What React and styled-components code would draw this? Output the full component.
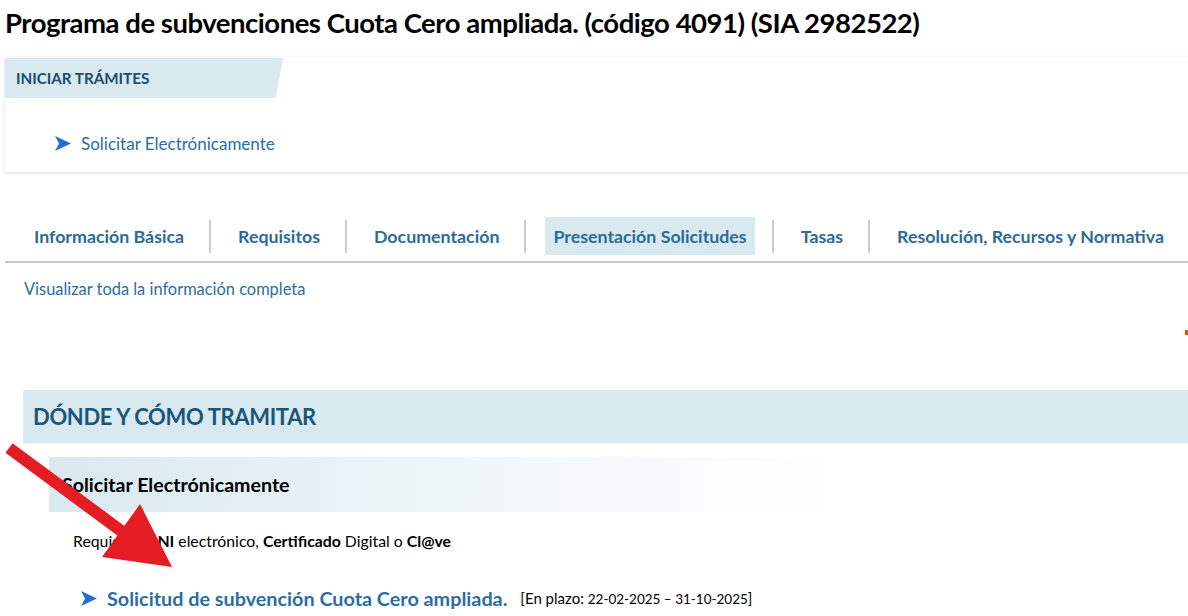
import React from "react";
import styled, { createGlobalStyle } from "styled-components";

const GlobalStyle = createGlobalStyle`
  html, body { margin: 0; padding: 0; background: #ffffff; }
  body {
    font-family: Lato, "Open Sans", sans-serif;
    overflow: hidden;
    width: 1188px;
    height: 616px;
  }
`;

const Page = styled.div`
  position: relative;
  width: 1200px;
  padding-left: 5px;
`;

const Title = styled.h1`
  margin: 0;
  padding-top: 6px;
  height: 51px;
  font-size: 27.5px;
  letter-spacing: -0.48px;
  font-weight: 700;
  color: #000;
  line-height: 34px;
`;

const Card = styled.section`
  height: 115px;
  background: #fff;
  box-shadow: 0 1px 4px rgba(0, 0, 0, 0.13);
  display: flex;
  flex-direction: column;
`;

const CardTab = styled.div`
  width: 278px;
  height: 40px;
  margin-top: 1px;
  background: #d9e9f0;
  clip-path: polygon(0 0, 100% 0, 97.4% 100%, 0 100%);
  display: flex;
  align-items: center;
  padding-left: 11px;
  box-sizing: border-box;
  font-size: 15.2px;
  font-weight: 700;
  color: #1b4d6c;
`;

const CardBody = styled.div`
  padding: 35px 0 0 50px;
`;

const LinkRow = styled.a`
  display: flex;
  align-items: center;
  gap: ${(p) => p.$gap || 10}px;
  text-decoration: none;
  color: #2b6da3;
  font-size: ${(p) => p.$size || 17}px;
  font-weight: ${(p) => p.$weight || 400};
  cursor: pointer;
`;

const SendIcon = ({ color = "#1e6fd8" }) => (
  <svg width="16" height="15" viewBox="0 0 16 15">
    <path d="M0 0 L16 7.5 L0 15 L4 7.5 Z" fill={color} />
  </svg>
);

const TabBar = styled.nav`
  margin-top: 45px;
  display: flex;
  align-items: center;
  padding-left: 21px;
  padding-bottom: 6px;
  border-bottom: 2px solid #c8c8c8;
`;

const Tab = styled.a`
  height: 38px;
  display: flex;
  align-items: center;
  padding: 0 8px;
  font-size: 17.8px;
  font-weight: 700;
  color: #2d6a98;
  background: ${(p) => (p.$active ? "#d9e9f0" : "transparent")};
  white-space: nowrap;
  cursor: pointer;
`;

const Separator = styled.span`
  width: 2px;
  height: 33px;
  background: #cbcbcb;
  margin: 0 19px 0 17px;
`;

const FullInfo = styled.a`
  display: block;
  margin: 16px 0 0 19px;
  font-size: 16.4px;
  color: #2b6da3;
  line-height: 20px;
  cursor: pointer;
`;

const EdgeRow = styled.div`
  display: flex;
  justify-content: flex-end;
  height: 20px;
  margin-top: 22px;
  padding-right: 17px;
`;

const EdgeMark = styled.span`
  width: 3px;
  height: 5px;
  margin-top: 9px;
  background: #d9531e;
`;

const Section = styled.section`
  margin: 49px 0 0 18px;
`;

const SectionHeader = styled.h2`
  margin: 0;
  height: 53px;
  display: flex;
  align-items: center;
  padding-left: 10px;
  background: #d9e9f0;
  font-size: 22px;
  font-weight: 700;
  color: #1a5678;
  letter-spacing: -0.35px;
`;

const SubHeader = styled.h3`
  margin: 14px 0 0 26px;
  width: 806px;
  height: 55px;
  box-sizing: border-box;
  display: flex;
  align-items: center;
  padding-left: 13px;
  background: linear-gradient(to right, #d9e9f0 0%, #f3f8fa 60%, #ffffff 100%);
  font-size: 19.6px;
  font-weight: 700;
  color: #000;
`;

const Requirement = styled.p`
  margin: 19px 0 0 50px;
  font-size: 15.8px;
  line-height: 20px;
  color: #000;
`;

const ApplyRow = styled.div`
  display: flex;
  align-items: center;
  margin: 35px 0 0 58px;
`;

const Deadline = styled.span`
  margin-left: 13px;
  font-size: 15px;
  color: #000;
  white-space: nowrap;
`;

const Dates = styled.span`
  font-size: 13.5px;
`;

const RedArrow = styled.svg`
  position: absolute;
  left: 0;
  top: 430px;
  pointer-events: none;
`;

const tabs = [
  "Información Básica",
  "Requisitos",
  "Documentación",
  "Presentación Solicitudes",
  "Tasas",
  "Resolución, Recursos y Normativa",
];

export default function App() {
  return (
    <>
      <GlobalStyle />
      <Page>
        <Title>
          Programa de subvenciones Cuota Cero ampliada. (código 4091) (SIA 2982522)
        </Title>
        <Card>
          <CardTab>INICIAR TRÁMITES</CardTab>
          <CardBody>
            <LinkRow>
              <SendIcon />
              Solicitar Electrónicamente
            </LinkRow>
          </CardBody>
        </Card>
        <TabBar>
          {tabs.map((t, i) => (
            <React.Fragment key={t}>
              {i > 0 && <Separator />}
              <Tab $active={t === "Presentación Solicitudes"}>{t}</Tab>
            </React.Fragment>
          ))}
        </TabBar>
        <FullInfo>Visualizar toda la información completa</FullInfo>
        <EdgeRow>
          <EdgeMark />
        </EdgeRow>
        <Section>
          <SectionHeader>DÓNDE Y CÓMO TRAMITAR</SectionHeader>
          <SubHeader>Solicitar Electrónicamente</SubHeader>
          <Requirement>
            Requisito: <b>DNI</b> electrónico, <b>Certificado</b> Digital o <b>Cl@ve</b>
          </Requirement>
          <ApplyRow>
            <LinkRow $size={19.8} $weight={700} $gap={10}>
              <SendIcon />
              Solicitud de subvención Cuota Cero ampliada.
            </LinkRow>
            <Deadline>
              [En plazo: <Dates>22-02-2025 – 31-10-2025</Dates>]
            </Deadline>
          </ApplyRow>
        </Section>
        <RedArrow width="200" height="160" viewBox="0 430 200 160">
          <line x1="9" y1="448" x2="124" y2="533" stroke="#e31d23" strokeWidth="12" />
          <polygon points="140,504 102,557 172,567" fill="#e31d23" />
        </RedArrow>
      </Page>
    </>
  );
}
